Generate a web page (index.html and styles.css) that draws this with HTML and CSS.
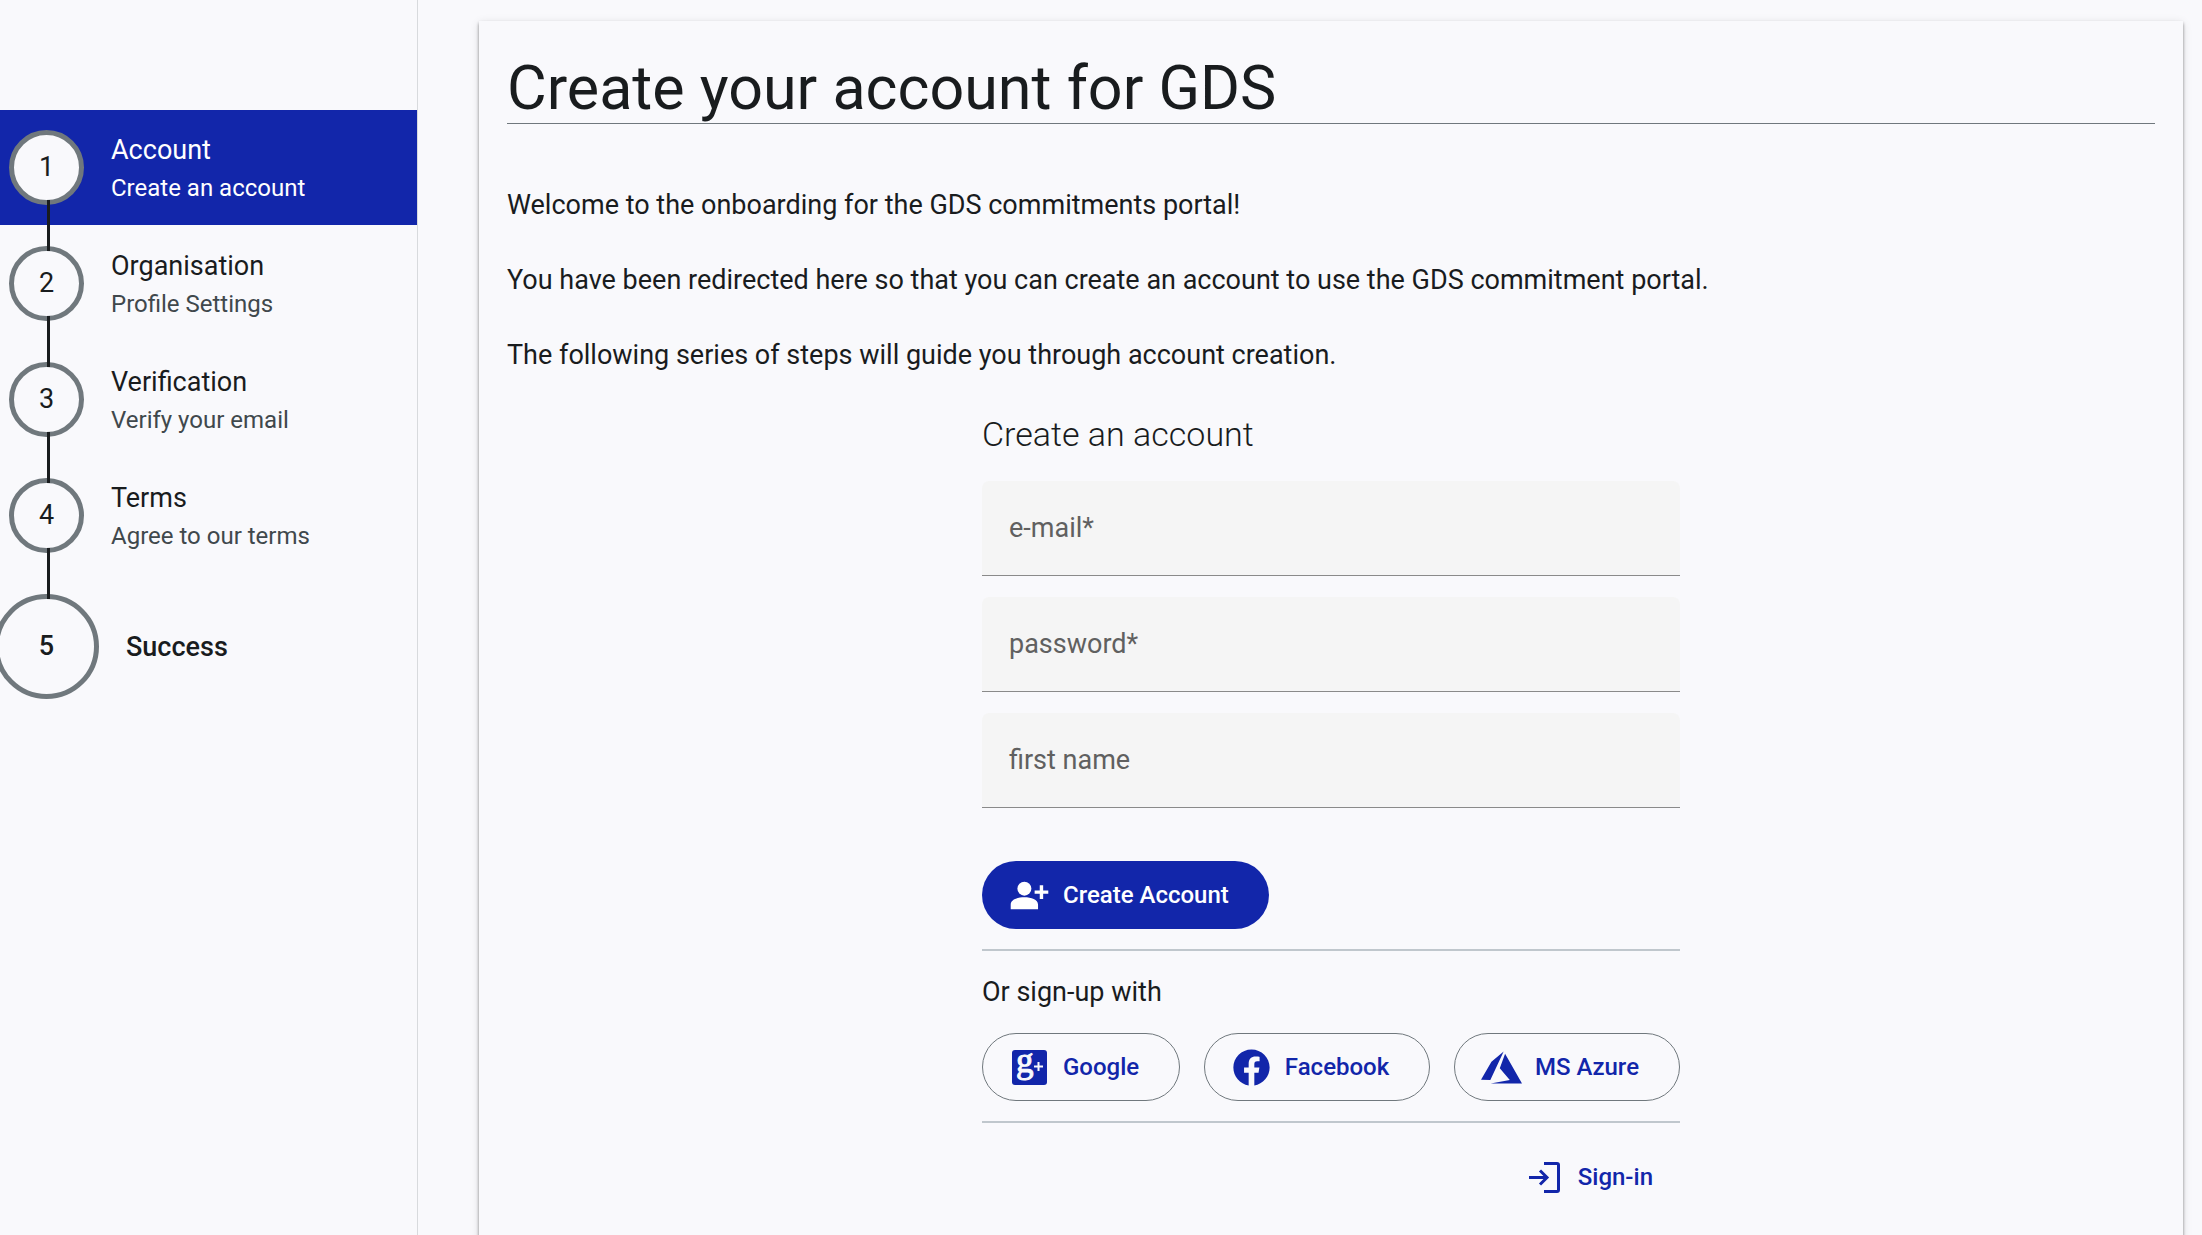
FILE: index.html
```html
<!DOCTYPE html>
<html lang="en">
  <head>
    <meta charset="UTF-8" />
    <meta name="viewport" content="width=device-width, initial-scale=1.0" />
    <title>Create your account for GDS</title>
    <link rel="stylesheet" href="styles.css" />
  </head>
  <body>
    <div class="layout">
      <nav class="sidebar">
        <ol class="steps">
          <li class="step active">
            <span class="step-number">1</span>
            <div class="step-text">
              <div class="step-title">Account</div>
              <div class="step-subtitle">Create an account</div>
            </div>
          </li>
          <li class="step">
            <span class="step-number">2</span>
            <div class="step-text">
              <div class="step-title">Organisation</div>
              <div class="step-subtitle">Profile Settings</div>
            </div>
          </li>
          <li class="step">
            <span class="step-number">3</span>
            <div class="step-text">
              <div class="step-title">Verification</div>
              <div class="step-subtitle">Verify your email</div>
            </div>
          </li>
          <li class="step">
            <span class="step-number">4</span>
            <div class="step-text">
              <div class="step-title">Terms</div>
              <div class="step-subtitle">Agree to our terms</div>
            </div>
          </li>
          <li class="step final">
            <span class="step-number">5</span>
            <div class="step-text">
              <div class="step-title">Success</div>
            </div>
          </li>
        </ol>
      </nav>

      <main class="content">
        <section class="card">
          <h1>Create your account for GDS</h1>

          <div class="intro">
            <p>Welcome to the onboarding for the GDS commitments portal!</p>
            <p>You have been redirected here so that you can create an account to use the GDS commitment portal.</p>
            <p>The following series of steps will guide you through account creation.</p>
          </div>

          <form class="account-form">
            <h2>Create an account</h2>

            <div class="field">
              <label for="email">e-mail*</label>
              <input type="email" id="email" required />
            </div>
            <div class="field">
              <label for="password">password*</label>
              <input type="password" id="password" required />
            </div>
            <div class="field">
              <label for="firstName">first name</label>
              <input type="text" id="firstName" />
            </div>

            <button type="submit" class="btn btn-primary">
              <svg class="icon" viewBox="0 0 24 24" aria-hidden="true">
                <circle cx="9" cy="8" r="4.1" />
                <path d="M1 20v-2.6C1 14.2 5 13 9 13s8 1.2 8 4.4V20zM15 9v2h3v3h2v-3h3V9h-3V6h-2v3z" />
              </svg>
              Create Account
            </button>

            <hr />

            <p class="signup-label">Or sign-up with</p>
            <div class="providers">
              <button type="button" class="btn btn-outline">
                <svg class="icon" viewBox="0 0 41 41" aria-hidden="true">
                  <rect x="3" y="3" width="35" height="35" rx="3" />
                  <text class="google-g" x="7" y="25">g</text>
                  <path class="google-plus" d="M25 19.5h9M29.5 15v9" />
                </svg>
                Google
              </button>
              <button type="button" class="btn btn-outline">
                <svg class="icon" viewBox="0.7 0.7 22.6 22.6" aria-hidden="true">
                  <path d="M12 2.04C6.5 2.04 2 6.53 2 12.06C2 17.06 5.66 21.21 10.44 21.96V14.96H7.9V12.06H10.44V9.85C10.44 7.34 11.93 5.96 14.22 5.96C15.31 5.96 16.45 6.15 16.45 6.15V8.62H15.19C13.95 8.62 13.56 9.39 13.56 10.17V12.06H16.34L15.89 14.96H13.56V21.96C18.34 21.21 22 17.06 22 12.06C22 6.53 17.5 2.04 12 2.04Z" />
                </svg>
                Facebook
              </button>
              <button type="button" class="btn btn-outline">
                <svg class="icon" viewBox="2 2 20 20" aria-hidden="true">
                  <path d="M13.05 4.24L6.56 18.05L2 18L7.09 9.24L13.05 4.24M13.75 5.33L22 19.76H6.74L16.04 18.1L11.17 12.31L13.75 5.33Z" />
                </svg>
                MS Azure
              </button>
            </div>

            <hr />

            <button type="button" class="btn btn-text">
              <svg class="icon" viewBox="0 0 41 41" aria-hidden="true">
                <path class="stroke" d="M20 6.5h13q1.5 0 1.5 1.5v25q0 1.5-1.5 1.5H20M5 20.5h18M16 13.5l7 7-7 7" />
              </svg>
              Sign-in
            </button>
          </form>
        </section>
      </main>
    </div>
  </body>
</html>
```
FILE: styles.css
```css
* {
  box-sizing: border-box;
}

body {
  margin: 0;
  font-family: Roboto, sans-serif;
  font-size: 27px;
  line-height: 37px;
  background-color: #f9f9fc;
  color: #191c1e;
}

.layout {
  display: flex;
  height: 100vh;
  overflow: hidden;
}

/* Sidebar stepper */
.sidebar {
  flex: 0 0 418px;
  padding-top: 110px;
  border-right: 1px solid #d8dadd;
}

.steps {
  list-style: none;
  margin: 0;
  padding: 0;
  display: flex;
  flex-direction: column;
  gap: 1px;
}

.step {
  position: relative;
  display: flex;
  align-items: center;
  gap: 27px;
  padding: 20px 9px;
}

.step-number {
  flex: none;
  display: flex;
  align-items: center;
  justify-content: center;
  width: 75px;
  height: 75px;
  border: 5px solid #70787d;
  border-radius: 50%;
  background-color: #f9f9fc;
  color: #191c1e;
}

/* line down to the next step */
.step:not(:last-child)::after {
  content: "";
  position: absolute;
  z-index: 1;
  top: 90px;
  left: 47px;
  width: 3px;
  height: 51px;
  background-color: #191c1e;
}

.step-text {
  margin: -2px 0;
}

.step-title {
  line-height: 40px;
}

.step-subtitle {
  font-size: 24px;
  line-height: 36px;
  color: #40484c;
}

.active {
  background-color: #1226aa;
}

.active .step-title,
.active .step-subtitle {
  color: #ffffff;
}

.final {
  font-weight: 500;
}

.final .step-number {
  width: 105px;
  height: 105px;
  margin-left: -15px;
}

/* Main card */
.content {
  flex: 1;
  padding: 21px 19px 21px 61px;
}

.card {
  min-height: 100vh;
  padding: 32px 28px;
  box-shadow: 0 2px 3px 0 rgba(0, 0, 0, 0.3),
    0 3px 3px 0 rgba(0, 0, 0, 0.14), 0 2px 9px 0 rgba(0, 0, 0, 0.12);
}

h1 {
  margin: 0 0 63px;
  font-size: 61px;
  font-weight: 400;
  line-height: 70px;
  border-bottom: 1px solid #70787d;
}

.intro {
  display: flex;
  flex-direction: column;
  gap: 38px;
}

.intro p {
  margin: 0;
}

/* Form */
.account-form {
  max-width: 698px;
  margin: 37px auto 0;
}

h2 {
  margin: 0 0 24px;
  font-size: 34px;
  font-weight: 300;
  line-height: 46px;
}

.field {
  display: grid;
  align-items: center;
  margin-bottom: 21px;
  background-color: #f5f5f5;
  border-bottom: 1px solid #8a8a8a;
  border-radius: 7px 7px 0 0;
}

.field label,
.field input {
  grid-area: 1 / 1;
}

.field label {
  padding-left: 27px;
  color: #606060;
}

.field input {
  width: 100%;
  height: 94px;
  padding: 0 27px;
  border: none;
  outline: none;
  background: none;
  font: inherit;
}

.btn {
  display: flex;
  align-items: center;
  gap: 13px;
  height: 68px;
  padding: 0 40px 0 27px;
  border: none;
  border-radius: 34px;
  background: none;
  color: #1226aa;
  font-family: inherit;
  font-size: 24px;
  font-weight: 500;
  cursor: pointer;
}

.btn-primary {
  margin-top: 53px;
  background-color: #1226aa;
  color: #ffffff;
}

.btn-outline {
  padding: 0 40px 0 26px;
  border: 1px solid #70787d;
}

.btn-text {
  margin-left: auto;
  padding: 0 27px;
}

.icon {
  flex: none;
  width: 41px;
  height: 41px;
  fill: currentColor;
}

.icon .stroke {
  fill: none;
  stroke: currentColor;
  stroke-width: 3px;
}

.google-g {
  font-family: "Liberation Serif", serif;
  font-size: 35px;
  fill: #f9f9fc;
  stroke: #f9f9fc;
  stroke-width: 1px;
}

.google-plus {
  stroke: #f9f9fc;
  stroke-width: 2px;
}

hr {
  margin: 20px 0;
  border: none;
  border-top: 2px solid #c0c7cd;
}

.signup-label {
  margin: 23px 0 22px;
}

.providers {
  display: flex;
  flex-wrap: wrap;
  justify-content: space-between;
  gap: 20px;
}
```
